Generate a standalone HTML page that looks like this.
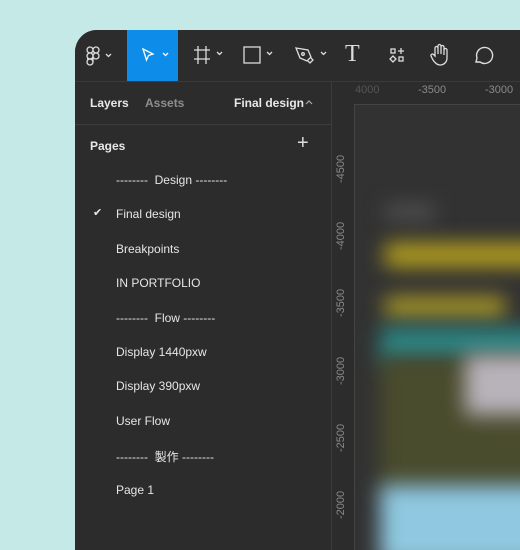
<!DOCTYPE html>
<html><head><style>
body{margin:0;width:520px;height:520px;overflow:hidden;background:#c5e9e6;font-family:"Liberation Sans","Noto Sans CJK JP",sans-serif;position:relative}
.win{position:absolute;left:75px;top:30px;width:480px;height:520px;background:#2c2c2c;border-top-left-radius:22px;overflow:hidden}
.tb{position:absolute;left:0;top:0;width:100%;height:51px;background:#2c2c2c;border-bottom:1px solid #3a3a3a}
.sel{position:absolute;left:52px;top:0;width:51px;height:51px;background:#0d8ce9}
svg{position:absolute}
.panel{position:absolute;left:0;top:52px;width:256px;height:470px;background:#2c2c2c;border-right:1px solid #3c3c3c}
.t{position:absolute;color:#e8e8e8;font-size:12px;white-space:nowrap}
.row{position:absolute;left:41px;color:#e6e6e6;font-size:12px;white-space:nowrap}
.canvas{position:absolute;left:257px;top:52px;width:230px;height:470px;background:#2c2c2c}
.area{position:absolute;left:22px;top:22px;width:220px;height:460px;background:#323232;overflow:hidden;border-left:1px solid #444;border-top:1px solid #444}
.b{position:absolute;filter:blur(10px)}
.rl{position:absolute;color:#8a8a8a;font-size:11px}
</style></head><body>
<div class="win">
 <div class="tb">
  <svg style="left:10px;top:15px" width="30" height="22" viewBox="0 0 30 22" fill="none" stroke="#ddd" stroke-width="1.3"><rect x="2" y="2" width="6" height="6" rx="3"/><rect x="8" y="2" width="6" height="6" rx="3"/><rect x="2" y="8" width="6" height="6" rx="3"/><circle cx="11" cy="11" r="3"/><path d="M2 17a3 3 0 0 1 6 0v0a3 3 0 0 1-6 0z"/><path d="M2 14h6v3"/><path d="M21 9l2.5 2.5L26 9"/></svg>
  <div class="sel"></div>
  <svg style="left:64px;top:17px" width="34" height="18" viewBox="0 0 34 18" fill="none" stroke="#fff" stroke-width="1.3"><path d="M4 2l10 5-4.5 1.5L7.5 13z"/><path d="M24 6l2.5 2.5L29 6"/></svg>
  <svg style="left:118px;top:15px" width="34" height="20" viewBox="0 0 34 20" fill="none" stroke="#ddd" stroke-width="1.3"><path d="M5 1v18M13 1v18M1 5h16M1 14h16"/><path d="M24 7l2.5 2.5L29 7"/></svg>
  <svg style="left:168px;top:15px" width="34" height="20" viewBox="0 0 34 20" fill="none" stroke="#ddd" stroke-width="1.3"><rect x="1" y="2" width="16" height="16"/><path d="M24 7l2.5 2.5L29 7"/></svg>
  <svg style="left:220px;top:15px" width="36" height="20" viewBox="0 0 36 20" fill="none" stroke="#ddd" stroke-width="1.3"><path d="M1 3l12 2 3 7-4 4-7-3z"/><circle cx="8" cy="9" r="1.3"/><path d="M13 16l2 2 3-3-2-2"/><path d="M26 7l2.5 2.5L31 7"/></svg>
  <div class="t" style="left:270px;top:11px;font-size:24px;color:#ddd;font-family:'Liberation Serif',serif">T</div>
  <svg style="left:314px;top:17px" width="18" height="18" viewBox="0 0 18 18" fill="none" stroke="#ddd" stroke-width="1.3"><rect x="2" y="2" width="4" height="4"/><rect x="10" y="10" width="4" height="4"/><path d="M12 1v6M9 4h6M4 9l3 3-3 3-3-3z"/></svg>
  <svg style="left:354px;top:13px" width="22" height="24" viewBox="0 0 22 24" fill="none" stroke="#ddd" stroke-width="1.3"><path d="M6 13V5a1.5 1.5 0 0 1 3 0v6V3a1.5 1.5 0 0 1 3 0v8V4a1.5 1.5 0 0 1 3 0v8V7a1.5 1.5 0 0 1 3 0v8c0 4-3 7-7 7-3 0-5-2-7-5l-2-4a1.5 1.5 0 0 1 2.5-1.5z"/></svg>
  <svg style="left:397px;top:15px" width="22" height="22" viewBox="0 0 22 22" fill="none" stroke="#ddd" stroke-width="1.4"><path d="M4 17l1-4a8 8 0 1 1 3 4z"/></svg>
 </div>
 <div class="panel">
  <div class="t" style="left:15px;top:14px;font-weight:bold">Layers</div>
  <div class="t" style="left:70px;top:14px;font-weight:bold;color:#8d8d8d">Assets</div>
  <div class="t" style="left:159px;top:14px;font-weight:bold">Final design</div>
  <svg style="left:229px;top:17px" width="10" height="8" viewBox="0 0 10 8" fill="none" stroke="#aaa" stroke-width="1.2"><path d="M2 5l3-3 3 3"/></svg>
  <div style="position:absolute;left:0;top:42px;width:256px;height:1px;background:#3c3c3c"></div>
  <div class="t" style="left:15px;top:57px;font-weight:bold">Pages</div>
  <div class="t" style="left:222px;top:50px;font-size:20px;font-weight:300;color:#ddd">+</div>
  <div class="row" style="top:91px">--------&nbsp; Design --------</div>
  <div class="t" style="left:18px;top:124px;font-size:11px">✔</div>
  <div class="row" style="top:125px">Final design</div>
  <div class="row" style="top:160px">Breakpoints</div>
  <div class="row" style="top:194px">IN PORTFOLIO</div>
  <div class="row" style="top:229px">--------&nbsp; Flow --------</div>
  <div class="row" style="top:263px">Display 1440pxw</div>
  <div class="row" style="top:297px">Display 390pxw</div>
  <div class="row" style="top:332px">User Flow</div>
  <div class="row" style="top:366px">--------&nbsp; 製作 --------</div>
  <div class="row" style="top:401px">Page 1</div>
 </div>
 <div class="canvas">
  <div class="rl" style="left:23px;top:2px;color:#555">4000</div>
  <div class="rl" style="left:86px;top:2px">-3500</div>
  <div class="rl" style="left:153px;top:2px">-3000</div>
  <div class="area">
   <div class="b" style="left:30px;top:100px;width:50px;height:14px;background:#555"></div>
   <div class="b" style="left:30px;top:138px;width:200px;height:24px;background:#b5a01f"></div>
   <div class="b" style="left:30px;top:192px;width:120px;height:20px;background:#ad9b28"></div>
   <div class="b" style="left:25px;top:222px;width:210px;height:36px;background:#2d8584"></div>
   <div class="b" style="left:25px;top:252px;width:210px;height:135px;background:#4a4c2e"></div>
   <div class="b" style="left:110px;top:250px;width:120px;height:60px;background:#b8b3bb"></div>
   <div class="b" style="left:25px;top:380px;width:210px;height:80px;background:#8fc8e0"></div>
  </div>
  <div class="rl" style="left:3px;top:101px;transform:rotate(-90deg);transform-origin:left top">-4500</div>
  <div class="rl" style="left:3px;top:168px;transform:rotate(-90deg);transform-origin:left top">-4000</div>
  <div class="rl" style="left:3px;top:235px;transform:rotate(-90deg);transform-origin:left top">-3500</div>
  <div class="rl" style="left:3px;top:303px;transform:rotate(-90deg);transform-origin:left top">-3000</div>
  <div class="rl" style="left:3px;top:370px;transform:rotate(-90deg);transform-origin:left top">-2500</div>
  <div class="rl" style="left:3px;top:437px;transform:rotate(-90deg);transform-origin:left top">-2000</div>
 </div>
</div>
</body></html>
